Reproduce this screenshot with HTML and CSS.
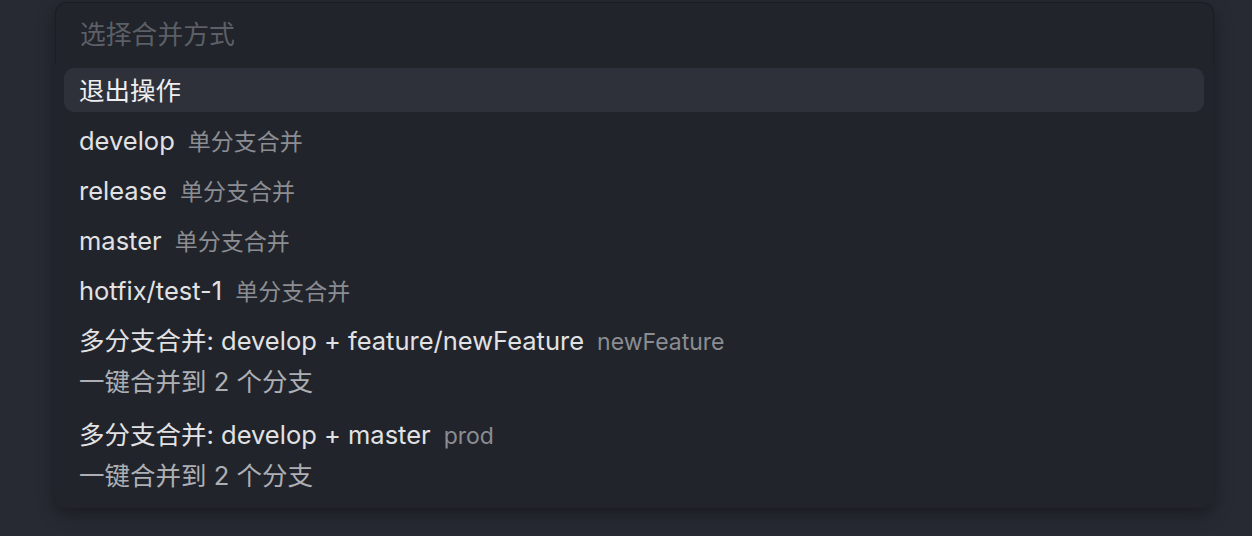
FILE: index.html
```html
<!DOCTYPE html>
<html lang="zh-CN">
<head>
<meta charset="utf-8">
<link rel="stylesheet" href="styles.css">
</head>
<body>
<div class="stage">
  <div class="picker">
    <div class="input">
      <span class="placeholder">选择合并方式</span>
    </div>
    <ul class="list">
      <li class="item active"><div class="line"><span class="label">退出操作</span></div></li>
      <li class="item"><div class="line"><span class="label">develop</span><span class="desc">单分支合并</span></div></li>
      <li class="item"><div class="line"><span class="label">release</span><span class="desc">单分支合并</span></div></li>
      <li class="item"><div class="line"><span class="label">master</span><span class="desc">单分支合并</span></div></li>
      <li class="item"><div class="line"><span class="label">hotfix/test-1</span><span class="desc">单分支合并</span></div></li>
      <li class="item multi">
        <div class="line"><span class="label">多分支合并: develop + feature/newFeature</span><span class="desc">newFeature</span></div>
        <div class="detail">一键合并到 2 个分支</div>
      </li>
      <li class="item multi">
        <div class="line"><span class="label">多分支合并: develop + master</span><span class="desc">prod</span></div>
        <div class="detail">一键合并到 2 个分支</div>
      </li>
    </ul>
  </div>
</div>
</body>
</html>
```
FILE: styles.css
```css
html, body {
  margin: 0;
  padding: 0;
}
body {
  width: 1252px;
  height: 536px;
  overflow: hidden;
  background: #272a32;
  font-family: "Inter", "Noto Sans CJK SC", sans-serif;
  -webkit-font-smoothing: antialiased;
}
.stage {
  padding: 2px 38px 0 55px;
}
.picker {
  width: 1159px;
  background: #21242b;
  border-radius: 12px;
  box-shadow: 0 6px 18px rgba(0, 0, 0, 0.35);
  padding-bottom: 8px;
}
.input {
  height: 63px;
  box-sizing: border-box;
  border: 1px solid #1b1d22;
  border-bottom: none;
  border-radius: 12px 12px 0 0;
  display: flex;
  align-items: center;
  padding: 0 0 4px 24px;
}
.placeholder {
  font-size: 25.8px;
  color: #5c5f66;
}
.list {
  list-style: none;
  margin: 0;
  padding: 3px 10px 0 9px;
  display: flex;
  flex-direction: column;
  gap: 6px;
}
.item {
  height: 44px;
  box-sizing: border-box;
  border-radius: 10px;
  padding-left: 15px;
  display: flex;
  flex-direction: column;
  justify-content: flex-start;
}
.item.active {
  background: #2e3139;
}
.line {
  height: 44px;
  line-height: 45px;
  white-space: nowrap;
}
.label {
  font-size: 25.5px;
  color: #e2e2e4;
}
.active .label {
  color: #eeeef0;
}
.desc {
  font-size: 23px;
  color: #8b8d92;
  margin-left: 13px;
}
.item.multi {
  height: 88px;
}
.detail {
  height: 40px;
  line-height: 39px;
  font-size: 25.5px;
  color: #adafb4;
}
```
